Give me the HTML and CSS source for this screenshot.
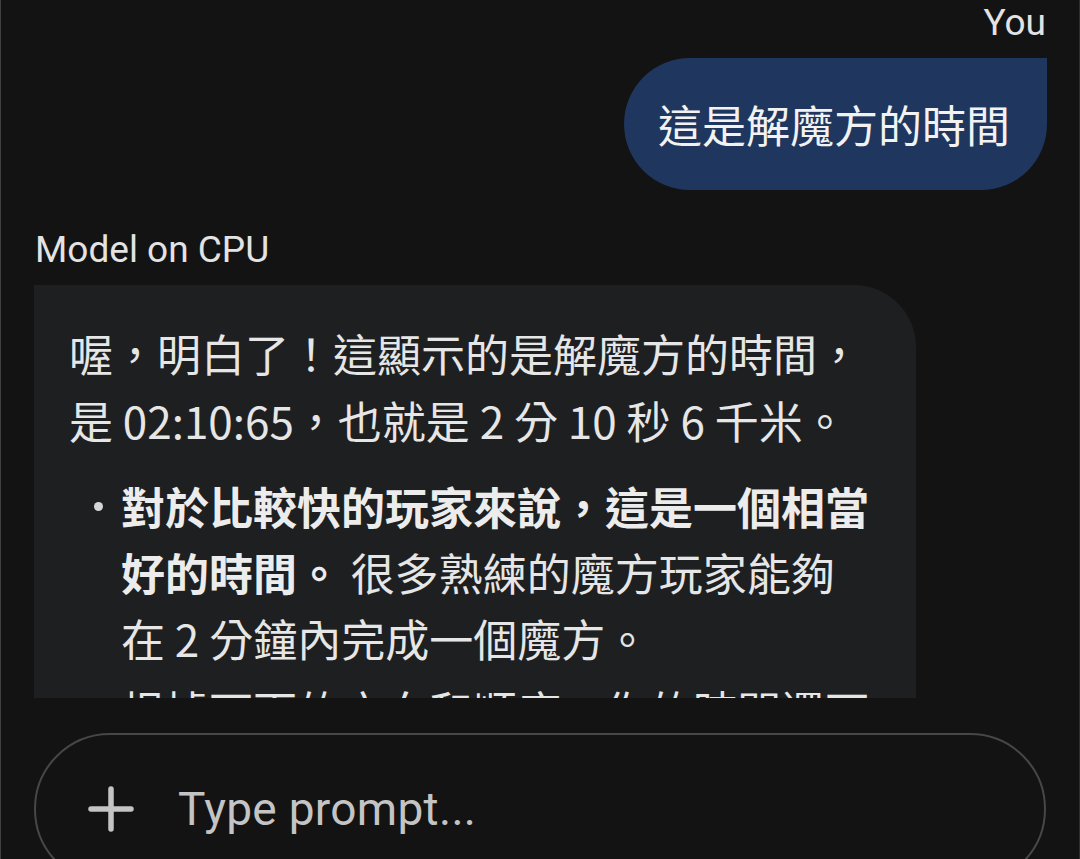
FILE: index.html
```html
<!DOCTYPE html>
<html lang="zh-Hant">
<head>
    <meta charset="UTF-8">
    <meta name="viewport" content="width=device-width, initial-scale=1.0">
    <title>Chat</title>
    <link rel="stylesheet" href="styles.css">
</head>
<body>
    <div class="screen">
        <div class="chat">
            <div class="msg msg-user">
                <div class="sender">You</div>
                <div class="bubble bubble-user">這是解魔方的時間</div>
            </div>
            <div class="msg msg-model">
                <div class="sender">Model on CPU</div>
                <div class="bubble bubble-model">
                    <p>喔，明白了！這顯示的是解魔方的時間，是 02:10:65，也就是 2 分 10 秒 6 千米。</p>
                    <ul class="points">
                        <li><div><strong>對於比較快的玩家來說，這是一個相當好的時間。</strong> 很多熟練的魔方玩家能夠在 2 分鐘內完成一個魔方。</div></li>
                        <li><div>根據下面的方向和順序，你的時間還可以再進步。</div></li>
                    </ul>
                </div>
            </div>
        </div>
        <div class="composer">
            <div class="prompt">
                <svg class="plus" width="46" height="46" viewBox="0 0 46 46">
                    <path d="M23 3v40M3 23h40" stroke="#c4c4c4" stroke-width="5.5" stroke-linecap="round" fill="none"/>
                </svg>
                <span class="placeholder">Type prompt...</span>
            </div>
        </div>
    </div>
</body>
</html>
```

FILE: styles.css
```css
* {
    margin: 0;
    padding: 0;
    box-sizing: border-box;
}

body {
    background-color: #131313;
    font-family: Roboto, "Noto Sans CJK TC", sans-serif;
    color: #e6e6e6;
    overflow: hidden;
}

.screen {
    height: 859px;
    border-left: 1px solid #404040;
    border-right: 1px solid #2e2e2e;
    overflow: hidden;
}

.chat {
    height: 698px;
    overflow: hidden;
    padding: 0 33px 0 33px;
}

.msg {
    display: flex;
    flex-direction: column;
}

.msg-user {
    align-items: flex-end;
}

.msg-model {
    align-items: flex-start;
    margin-top: 37px;
}

.sender {
    font-size: 37px;
    line-height: 46px;
    color: #e3e3e3;
    padding: 0 1px;
}

.msg-user .sender {
    margin-right: -1px;
}

.bubble {
    font-family: "Noto Sans CJK TC", sans-serif;
    font-size: 44px;
}

.bubble-user {
    margin-top: 12px;
    margin-right: -1px;
    background-color: #1f365f;
    color: #f2f2f2;
    line-height: 64px;
    padding: 34px 37px 34px 34px;
    border-radius: 66px 0 66px 66px;
}

.bubble-model {
    margin-top: 12px;
    width: 882px;
    background-color: #1e1f21;
    padding: 35px 40px 40px 35px;
    border-radius: 0 62px 0 0;
    line-height: 67px;
}

.points {
    list-style: none;
    margin-top: 19px;
}

.points li {
    display: flex;
    line-height: 66px;
    margin-bottom: 6px;
}

.points li::before {
    content: "";
    flex: 0 0 9px;
    height: 9px;
    margin: 29px 18px 0 25px;
    border-radius: 50%;
    background-color: #d6d6d6;
}

.points strong {
    font-weight: 700;
    color: #ececec;
}

.composer {
    padding: 35px 33px 0 33px;
}

.prompt {
    height: 152px;
    border: 2px solid #474747;
    border-radius: 76px;
    display: flex;
    align-items: center;
    padding-left: 52px;
    gap: 44px;
}

.plus {
    flex: 0 0 46px;
}

.placeholder {
    font-size: 46px;
    color: #c4c4c4;
    letter-spacing: 0.3px;
}
```
